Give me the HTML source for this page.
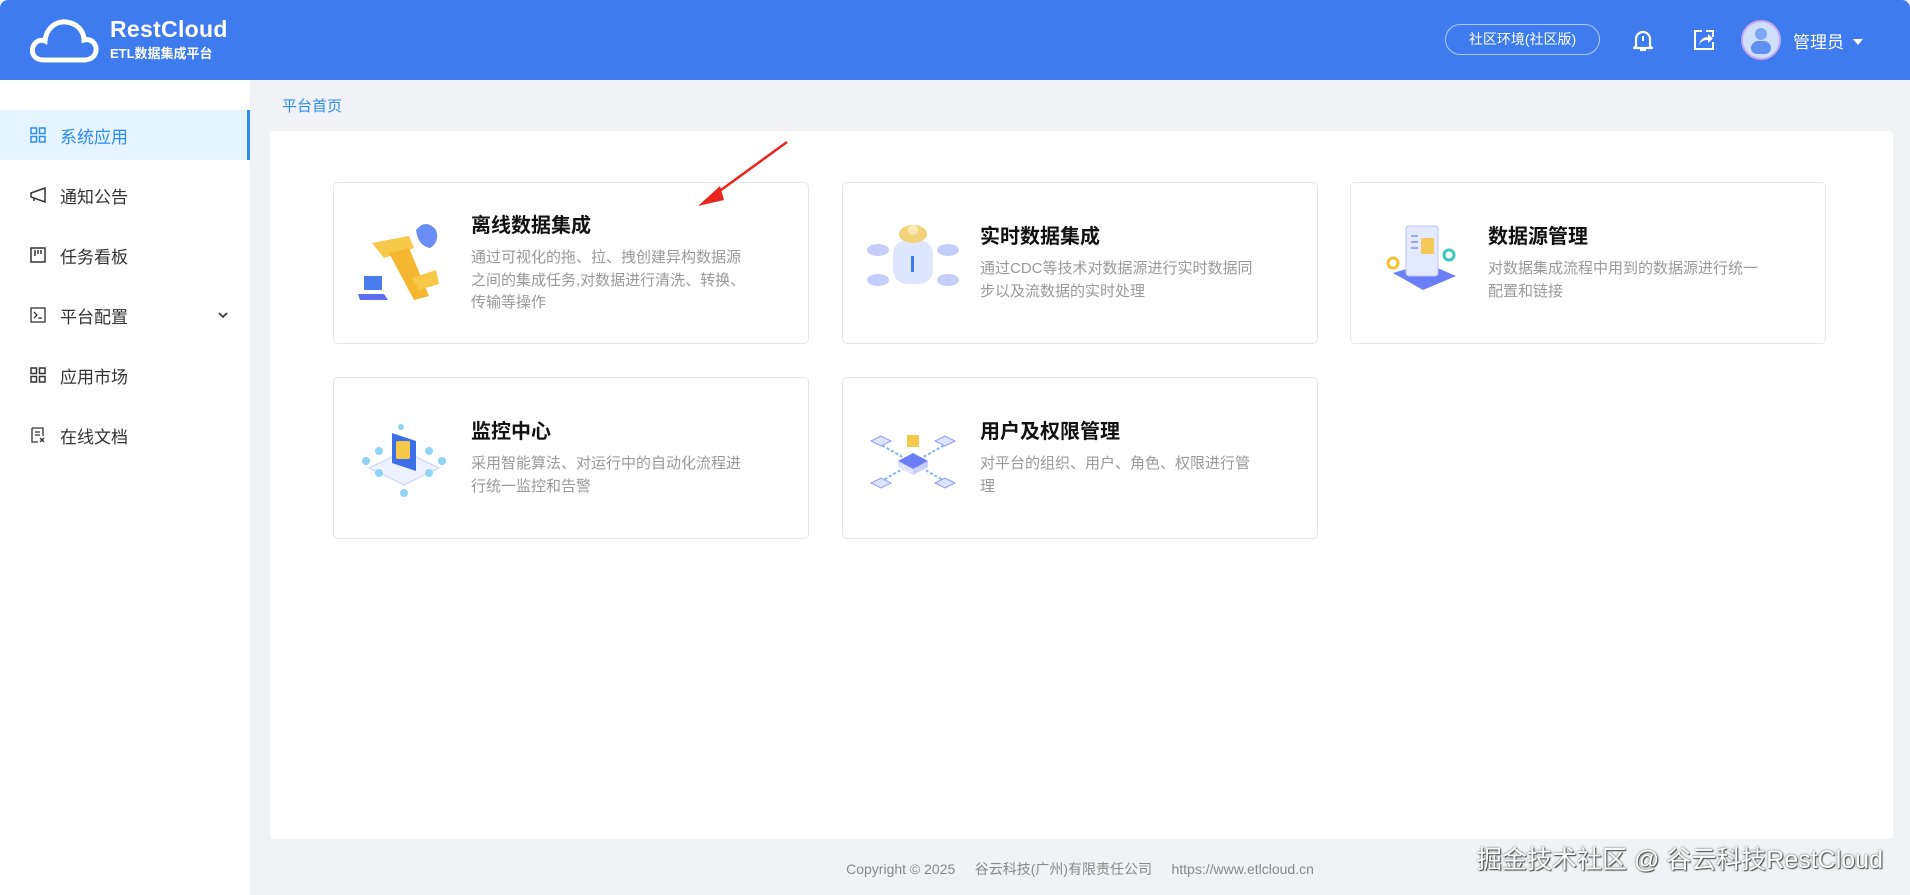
<!DOCTYPE html>
<html><head><meta charset="utf-8"><style>
*{margin:0;padding:0;box-sizing:border-box}
body{width:1910px;height:895px;overflow:hidden;background:#f0f2f5;font-family:"Liberation Sans","Noto Sans CJK SC",sans-serif;position:relative}
.hdr{position:absolute;left:0;top:0;width:1910px;height:80px;background:#3d7bef;border-radius:8px 8px 0 0}
.side{position:absolute;left:0;top:80px;width:250px;height:815px;background:#fff}
.item{position:absolute;left:0;width:250px;height:50px;display:flex;align-items:center;font-size:17px;color:#333}
.item svg{position:absolute;left:30px}
.item span{position:absolute;left:60px}
.item.act{background:#e6f4ff;color:#2d8cf0;border-right:3px solid #2d8cf0}
.panel{position:absolute;left:270px;top:131px;width:1623px;height:708px;background:#fff;border-radius:4px}
.card{position:absolute;width:476px;height:162px;border:1px solid #e4e6ea;border-radius:5px;background:#fff;display:flex;align-items:center}
.card .img{position:absolute;left:20px;top:50%;transform:translateY(-50%);width:100px;height:90px}
.card .txt{position:absolute;left:137px;width:277px;top:50%;transform:translateY(-50%)}
.card h3{font-size:20px;font-weight:bold;color:#111;line-height:28px;margin-bottom:7px}
.card p{font-size:15px;color:#999;line-height:22.5px}
</style></head><body>
<div class="hdr">
<svg style="position:absolute;left:28px;top:16px" width="72" height="48" viewBox="0 0 72 48"><path d="M16 44 C6 44 3 37 5 31 C7 25 13 23 17 25 C18 13 27 5 38 6 C49 7 56 15 56 24 C63 22 69 28 68 35 C67 41 62 44 56 44 Z" fill="none" stroke="#fff" stroke-width="5"/></svg>
<div style="position:absolute;left:110px;top:16px;color:#fff;font-size:23px;font-weight:bold;letter-spacing:0.3px">RestCloud</div>
<div style="position:absolute;left:110px;top:43px;color:#fff;font-size:13px;font-weight:bold">ETL数据集成平台</div>
<div style="position:absolute;left:1445px;top:24px;width:155px;height:31px;border:1px solid rgba(255,255,255,.6);border-radius:16px;color:#fff;font-size:14px;text-align:center;line-height:29px">社区环境(社区版)</div>
<svg style="position:absolute;left:1632px;top:29px" width="22" height="24" viewBox="0 0 22 24"><path d="M4 17 V10 a7 7 0 0 1 14 0 V17 L20 19 H2 Z" fill="none" stroke="#fff" stroke-width="2.2" stroke-linejoin="round"/><path d="M8 21 h6" stroke="#fff" stroke-width="2.2"/><path d="M11 7 v5" stroke="#fff" stroke-width="2"/></svg>
<svg style="position:absolute;left:1693px;top:29px" width="22" height="22" viewBox="0 0 22 22"><path d="M9 2 H2 V20 H20 V13" fill="none" stroke="#fff" stroke-width="2"/><path d="M6 16 C7 10 11 8 15 8 V5 L20 9.5 L15 14 V11 C11 11 8 12 6 16 Z" fill="#fff"/><path d="M13 2 H20 V8" fill="none" stroke="#fff" stroke-width="2"/></svg>
<div style="position:absolute;left:1743px;top:22px;width:36px;height:36px;border-radius:50%;background:#cfe0ff;box-shadow:0 0 0 2px #c8a6f0"><div style="position:absolute;left:12px;top:6px;width:12px;height:12px;border-radius:50%;background:#7ea6f5"></div><div style="position:absolute;left:8px;top:19px;width:20px;height:13px;border-radius:10px 10px 8px 8px;background:#5f8ff0"></div></div>
<div style="position:absolute;left:1793px;top:28px;color:#fff;font-size:17px">管理员</div>
<div style="position:absolute;left:1853px;top:39px;border-left:5px solid transparent;border-right:5px solid transparent;border-top:6px solid #fff"></div>
</div>
<div class="side">
<div class="item act" style="top:30px"><svg width="16" height="16" viewBox="0 0 16 16" fill="none" stroke="#2d8cf0" stroke-width="1.5"><rect x="1" y="1" width="5.5" height="5.5"/><rect x="9.5" y="1" width="5.5" height="5.5"/><rect x="1" y="9.5" width="5.5" height="5.5"/><rect x="9.5" y="9.5" width="5.5" height="5.5"/></svg><span>系统应用</span></div>
<div class="item" style="top:90px"><svg width="16" height="16" viewBox="0 0 16 16" fill="none" stroke="#333" stroke-width="1.5"><path d="M1 6 L15 1 V15 L1 10 Z"/><path d="M4 11 V14"/></svg><span>通知公告</span></div>
<div class="item" style="top:150px"><svg width="16" height="16" viewBox="0 0 16 16" fill="none" stroke="#333" stroke-width="1.5"><rect x="1" y="1" width="14" height="14"/><path d="M5 3 V9 M8 3 V7 M11 3 V7"/></svg><span>任务看板</span></div>
<div class="item" style="top:210px"><svg width="16" height="16" viewBox="0 0 16 16" fill="none" stroke="#333" stroke-width="1.3"><rect x="1" y="1" width="14" height="14"/><path d="M4 5 L7 8 L4 11 M8 11 H12"/></svg><span>平台配置</span><svg style="left:218px" width="10" height="7" viewBox="0 0 10 7"><path d="M1 1 L5 5 L9 1" fill="none" stroke="#333" stroke-width="1.6"/></svg></div>
<div class="item" style="top:270px"><svg width="16" height="16" viewBox="0 0 16 16" fill="none" stroke="#333" stroke-width="1.5"><rect x="1" y="1" width="5.5" height="5.5"/><rect x="9.5" y="1" width="5.5" height="5.5"/><rect x="1" y="9.5" width="5.5" height="5.5"/><rect x="9.5" y="9.5" width="5.5" height="5.5"/></svg><span>应用市场</span></div>
<div class="item" style="top:330px"><svg width="16" height="16" viewBox="0 0 16 16" fill="none" stroke="#333" stroke-width="1.3"><path d="M2 1 H13 V9 M2 1 V15 H8 M5 5 H10 M5 8 H10 M10 11 L14 15 M10 15 L14 11"/></svg><span>在线文档</span></div>
</div>
<div style="position:absolute;left:282px;top:95px;font-size:15px;color:#2d8cf0">平台首页</div>
<div class="panel"></div>

<div class="card" style="left:333px;top:182px">
<svg class="img" viewBox="0 0 100 90"><path d="M18 25 L55 18 L60 30 L30 40 Z" fill="#f7c948"/><path d="M35 35 L55 30 L75 78 L60 82 Z" fill="#f5b630"/><path d="M58 60 L82 52 L85 66 L65 72 Z" fill="#f7c948"/><path d="M62 12 q10-12 20 0 q4 12-6 18 q-12-2-14-18 Z" fill="#6a8cf5"/><rect x="10" y="58" width="18" height="14" fill="#4a7cf0"/><path d="M4 76 L30 76 L34 82 L6 82 Z" fill="#5b6ff0"/></svg>
<div class="txt"><h3>离线数据集成</h3><p>通过可视化的拖、拉、拽创建异构数据源之间的集成任务,对数据进行清洗、转换、传输等操作</p></div></div>

<div class="card" style="left:842px;top:182px">
<svg class="img" viewBox="0 0 100 90"><ellipse cx="15" cy="32" rx="11" ry="6" fill="#c5cdfb"/><ellipse cx="85" cy="32" rx="11" ry="6" fill="#c5cdfb"/><ellipse cx="15" cy="62" rx="11" ry="6" fill="#c5cdfb"/><ellipse cx="85" cy="62" rx="11" ry="6" fill="#c5cdfb"/><rect x="30" y="22" width="40" height="44" rx="14" fill="#dfe6ff"/><ellipse cx="50" cy="16" rx="14" ry="9" fill="#f2d27a"/><circle cx="50" cy="12" r="5" fill="#fbe9b5"/><rect x="48" y="38" width="3" height="16" fill="#3b7bf0"/></svg>
<div class="txt"><h3>实时数据集成</h3><p>通过CDC等技术对数据源进行实时数据同步以及流数据的实时处理</p></div></div>

<div class="card" style="left:1350px;top:182px">
<svg class="img" viewBox="0 0 100 90"><path d="M22 55 L55 45 L85 58 L52 72 Z" fill="#6c7ef5"/><rect x="35" y="8" width="32" height="50" rx="3" fill="#e3e9ff" stroke="#b8c4f8"/><rect x="50" y="20" width="13" height="16" fill="#f4c957"/><path d="M40 18 H47 M40 24 H47 M40 30 H47" stroke="#9aa8f0" stroke-width="2"/><circle cx="22" cy="45" r="5" fill="none" stroke="#f4c230" stroke-width="3"/><circle cx="78" cy="37" r="5" fill="none" stroke="#3cc8c0" stroke-width="3"/></svg>
<div class="txt"><h3>数据源管理</h3><p>对数据集成流程中用到的数据源进行统一配置和链接</p></div></div>

<div class="card" style="left:333px;top:377px">
<svg class="img" viewBox="0 0 100 90"><path d="M15 55 L50 38 L85 55 L50 72 Z" fill="#eef1ff" stroke="#c9d0fb"/><path d="M38 20 L62 28 L62 58 L38 50 Z" fill="#3b6fe8"/><rect x="42" y="28" width="14" height="18" rx="2" fill="#f5c84a"/><g fill="#8fd3f5"><circle cx="12" cy="48" r="4"/><circle cx="88" cy="48" r="4"/><circle cx="25" cy="38" r="4"/><circle cx="75" cy="38" r="4"/><circle cx="25" cy="60" r="4"/><circle cx="75" cy="60" r="4"/><circle cx="50" cy="80" r="4"/><circle cx="47" cy="14" r="3"/></g></svg>
<div class="txt"><h3>监控中心</h3><p>采用智能算法、对运行中的自动化流程进行统一监控和告警</p></div></div>

<div class="card" style="left:842px;top:377px">
<svg class="img" viewBox="0 0 100 90"><path d="M15 30 L85 70 M85 30 L15 70" stroke="#7bb8f5" stroke-width="2" stroke-dasharray="3 2"/><path d="M35 48 L50 40 L65 48 L50 56 Z" fill="#6c7ef5"/><path d="M35 48 L50 56 V62 L35 54 Z" fill="#dfe3ff"/><path d="M65 48 L50 56 V62 L65 54 Z" fill="#c8cffb"/><rect x="44" y="22" width="12" height="12" fill="#f5c84a"/><g fill="#dfe3ff" stroke="#8c9cf5"><path d="M8 28 L18 23 L28 28 L18 33 Z"/><path d="M72 28 L82 23 L92 28 L82 33 Z"/><path d="M8 70 L18 65 L28 70 L18 75 Z"/><path d="M72 70 L82 65 L92 70 L82 75 Z"/></g></svg>
<div class="txt"><h3>用户及权限管理</h3><p>对平台的组织、用户、角色、权限进行管理</p></div></div>

<svg style="position:absolute;left:690px;top:138px" width="105" height="75" viewBox="0 0 105 75"><path d="M97 4 L20 60" stroke="#e8261e" stroke-width="2.5"/><path d="M8 68 L30 48 L34 62 Z" fill="#e8261e"/></svg>

<div style="position:absolute;left:0;width:1910px;top:859px;text-align:center;padding-left:250px;font-size:14px;color:#888">Copyright © 2025&nbsp;&nbsp;&nbsp;&nbsp;&nbsp;谷云科技(广州)有限责任公司&nbsp;&nbsp;&nbsp;&nbsp;&nbsp;https://www.etlcloud.cn</div>
<div style="position:absolute;left:1477px;top:840px;font-size:25px;color:#fff;text-shadow:0 0 2px #555,1px 1px 1px #444">掘金技术社区 @ 谷云科技RestCloud</div>
</body></html>
